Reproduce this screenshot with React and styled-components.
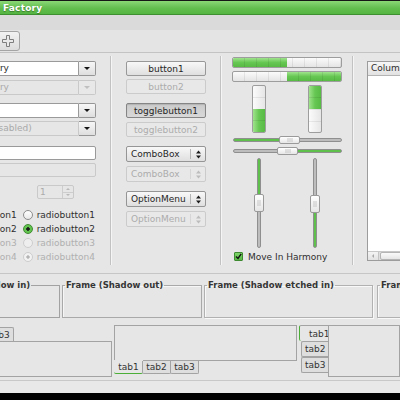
import React from "react";
import styled, { createGlobalStyle } from "styled-components";

const GlobalStyle = createGlobalStyle`
  html, body { margin: 0; padding: 0; background: #e6e6e6; }
  body { font-family: "DejaVu Sans", "Liberation Sans", sans-serif; font-size: 9px; color: #2e2e2e; }
  *, *::before, *::after { box-sizing: border-box; }
`;

const Window = styled.div`
  width: 400px; height: 400px; overflow: hidden;
  display: flex; flex-direction: column; background: #e6e6e6;
`;

const TitleBar = styled.header`
  flex: none; height: 15px; display: flex; align-items: center; padding-left: 3px;
  border-top: 1px solid #161616; border-bottom: 1px solid #3d8f2f;
  background: linear-gradient(#8ad776, #62be4e 55%, #55b542);
`;
const Title = styled.span`
  color: #fff; font-weight: bold; font-size: 9px; letter-spacing: 0.2px;
  text-shadow: 0 1px 1px rgba(0,0,0,0.35);
`;
const MenuBar = styled.div`flex: none; height: 15px; background: #dadada;`;
const Toolbar = styled.div`
  flex: none; height: 23px; display: flex; align-items: flex-start; padding-top: 1px;
  background: #e4e4e4; border-bottom: 1px solid #c3c3c3;
`;
const ToolButton = styled.div`
  width: 24px; height: 20px; margin-left: -4px; display: flex; align-items: center; justify-content: center;
  border: 1px solid #a4a4a4; border-radius: 3px; background: linear-gradient(#f2f2f2, #dcdcdc);
`;

const Main = styled.main`
  flex: none; height: 221px; display: flex; border-bottom: 1px solid #c6c6c6;
`;
const VSep = styled.div`
  flex: none; width: 2px; margin: 3px 0 8px;
  border-left: 1px solid #c2c2c2; border-right: 1px solid #f5f5f5;
`;

/* ---------- column 1 ---------- */
const EntryColumn = styled.section`
  flex: none; width: 110px; overflow: hidden; display: flex; flex-direction: column;
  align-items: flex-end; padding: 8px 14px 0 0;
`;
const Combo = styled.div`
  flex: none; display: flex; width: ${p => p.$w}px; height: 15px; margin-top: ${p => p.$mt || 0}px;
`;
const ComboEntry = styled.div`
  flex: 1; min-width: 0; padding-left: 3px; line-height: 13px; white-space: nowrap; overflow: hidden;
  border: 1px solid ${p => (p.$disabled ? "#c9c9c9" : "#9a9a9a")}; border-radius: 2px 0 0 2px;
  background: ${p => (p.$disabled ? "#e6e6e6" : "#ffffff")};
  color: ${p => (p.$disabled ? "#a9a9a9" : "#2e2e2e")};
`;
const ComboArrow = styled.div`
  flex: none; width: 17px; display: flex; align-items: center; justify-content: center;
  border: 1px solid ${p => (p.$disabled ? "#c9c9c9" : "#959595")}; border-left: none; border-radius: 0 2px 2px 0;
  background: ${p => (p.$disabled ? "#e8e8e8" : "linear-gradient(#f7f7f7, #dedede)")};
  &::before {
    content: ""; border-left: 3px solid transparent; border-right: 3px solid transparent;
    border-top: 3px solid ${p => (p.$disabled ? "#c0c0c0" : "#151515")};
  }
`;
const Entry = styled.div`
  flex: none; width: 120px; height: 14px; margin-top: ${p => p.$mt}px; border-radius: 2px;
  border: 1px solid ${p => (p.$disabled ? "#c9c9c9" : "#9a9a9a")};
  background: ${p => (p.$disabled ? "#e6e6e6" : "#ffffff")};
`;
const Spin = styled.div`
  flex: none; display: flex; width: 37px; height: 14px; margin: 8px 22px 0 0;
  border: 1px solid #c9c9c9; border-radius: 2px; background: #e6e6e6; color: #ababab;
`;
const SpinValue = styled.span`flex: 1; padding-left: 2px; line-height: 12px;`;
const SpinArrows = styled.div`
  flex: none; width: 11px; display: flex; flex-direction: column; border-left: 1px solid #cdcdcd;
`;
const SpinHalf = styled.div`
  flex: 1; display: flex; align-items: center; justify-content: center;
  border-top: ${p => (p.$down ? "1px solid #cdcdcd" : "none")};
  &::before {
    content: ""; border-left: 2px solid transparent; border-right: 2px solid transparent;
    ${p => (p.$down ? "border-top: 2px solid #b8b8b8;" : "border-bottom: 2px solid #b8b8b8;")}
  }
`;
const RadioRow = styled.div`
  flex: none; display: flex; align-items: center; height: 14px; margin: ${p => p.$mt || 0}px 1px 0 0;
  white-space: nowrap; color: ${p => (p.$disabled ? "#b0b0b0" : "#2e2e2e")};
`;
const SideLabel = styled.span`margin-right: 6px;`;
const Radio = styled.span`
  flex: none; width: 10px; height: 10px; border-radius: 50%;
  border: 1px solid ${p => (p.$disabled ? "#cdcdcd" : p.$checked ? "#3f8b31" : "#8d8d8d")};
  background: ${p =>
    p.$checked
      ? p.$disabled
        ? "radial-gradient(circle, #b4b4b4 0 1.4px, #f2f2f2 1.9px)"
        : "radial-gradient(circle, #1b1b1b 0 1.5px, #63c34f 2px)"
      : p.$disabled
      ? "#eeeeee"
      : "linear-gradient(#ffffff, #e8e8e8)"};
`;
const RadioText = styled.span`margin-left: 4px;`;

/* ---------- column 2 ---------- */
const ButtonColumn = styled.section`
  flex: none; width: 108px; display: flex; flex-direction: column; align-items: center; padding-top: 8px;
`;
const Button = styled.div`
  flex: none; width: 80px; height: 15px; margin-top: ${p => p.$mt || 0}px;
  display: flex; align-items: center; justify-content: center; border-radius: 2px;
  border: 1px solid ${p => (p.$disabled ? "#cbcbcb" : p.$active ? "#858585" : "#989898")};
  background: ${p =>
    p.$disabled ? "#e8e8e8" : p.$active ? "linear-gradient(#cbcbcb, #d8d8d8)" : "linear-gradient(#f8f8f8, #dfdfdf)"};
  box-shadow: ${p => (p.$active ? "inset 0 1px 1px rgba(0,0,0,0.12)" : "none")};
  color: ${p => (p.$disabled ? "#acacac" : "#262626")};
`;
const ComboButton = styled.div`
  flex: none; width: 80px; height: 16px; margin-top: ${p => p.$mt || 0}px;
  display: flex; align-items: center; border-radius: 2px;
  border: 1px solid ${p => (p.$disabled ? "#cbcbcb" : "#959595")};
  background: ${p => (p.$disabled ? "#e8e8e8" : "linear-gradient(#f8f8f8, #dfdfdf)")};
  color: ${p => (p.$disabled ? "#acacac" : "#262626")};
`;
const ComboLabel = styled.span`flex: 1; padding-left: 4px; white-space: nowrap;`;
const ComboDivider = styled.span`
  flex: none; width: 1px; height: 10px; background: ${p => (p.$disabled ? "#d6d6d6" : "#b5b5b5")};
`;
const UpDown = styled.span`flex: none; width: 14px; display: flex; justify-content: center;`;

/* ---------- column 3 ---------- */
const RangeColumn = styled.section`
  flex: none; width: 130px; display: flex; flex-direction: column; padding: 4px 0 0 10px;
`;
const HProgress = styled.div`
  flex: none; width: 110px; height: 11px; margin-top: ${p => p.$mt || 0}px; display: flex;
  flex-direction: ${p => (p.$reverse ? "row-reverse" : "row")};
  border: 1px solid #9d9d9d; border-radius: 2px; overflow: hidden;
  background:
    repeating-linear-gradient(90deg, transparent 0 11px, rgba(0,0,0,0.07) 11px 12px),
    linear-gradient(#fbfbfb, #e4e4e4);
`;
const HFill = styled.div`
  flex: none; width: ${p => p.$pct}%; height: 100%;
  background:
    repeating-linear-gradient(90deg, transparent 0 11px, rgba(0,0,0,0.08) 11px 12px),
    linear-gradient(#9fe38c, #66c752 50%, #58bb44);
`;
const VProgressRow = styled.div`
  flex: none; display: flex; gap: 42px; padding-left: 20px; margin-top: 3px;
`;
const VProgress = styled.div`
  flex: none; width: 14px; height: 48px; display: flex;
  flex-direction: ${p => (p.$reverse ? "column" : "column-reverse")};
  border: 1px solid #9d9d9d; border-radius: 2px; overflow: hidden;
  background:
    repeating-linear-gradient(180deg, transparent 0 11px, rgba(0,0,0,0.07) 11px 12px),
    linear-gradient(90deg, #fbfbfb, #e6e6e6);
`;
const VFill = styled.div`
  flex: none; height: ${p => p.$pct}%;
  background:
    repeating-linear-gradient(180deg, transparent 0 11px, rgba(0,0,0,0.08) 11px 12px),
    linear-gradient(90deg, #9fe38c, #66c752 50%, #58bb44);
`;
const HScale = styled.div`
  flex: none; position: relative; width: 109px; height: 8px; margin: 3px 0 0 1px;
  display: flex; align-items: center;
`;
const HTrough = styled.div`
  width: 100%; height: 4px; border-radius: 2px; border: 1px solid #8f8f8f;
  background: ${p =>
    p.$greenRight
      ? `linear-gradient(90deg, #bdbdbd 0 ${p.$at}px, #5fc04b ${p.$at}px)`
      : `linear-gradient(90deg, #5fc04b 0 ${p.$at}px, #bdbdbd ${p.$at}px)`};
`;
const Grip = styled.div`
  position: absolute; border: 1px solid #9a9a9a; border-radius: 2px;
  background: linear-gradient(#ffffff, #e6e6e6);
  display: flex; align-items: center; justify-content: center;
  &::after {
    content: ""; width: ${p => (p.$vertical ? "4px" : "6px")}; height: ${p => (p.$vertical ? "6px" : "4px")};
    background: radial-gradient(circle, #c2c2c2 0 0.6px, transparent 0.8px) 0 0 / 2px 2px;
  }
`;
const HGrip = styled(Grip)`top: 0; width: 21px; height: 8px;`;
const VScaleRow = styled.div`
  flex: none; display: flex; gap: 46px; padding-left: 22px; margin-top: 3px;
`;
const VScale = styled.div`
  flex: none; position: relative; width: 10px; height: 90px; display: flex; justify-content: center;
`;
const VTrough = styled.div`
  width: 4px; height: 100%; border-radius: 2px; border: 1px solid #8f8f8f;
  background: ${p =>
    p.$greenBottom
      ? `linear-gradient(180deg, #bdbdbd 0 ${p.$at}px, #5fc04b ${p.$at}px)`
      : `linear-gradient(180deg, #5fc04b 0 ${p.$at}px, #bdbdbd ${p.$at}px)`};
`;
const VGrip = styled(Grip)`left: 0; width: 10px; height: 18px;`;
const CheckRow = styled.label`
  flex: none; display: flex; align-items: center; gap: 5px; height: 11px; margin: 3px 0 0 2px; white-space: nowrap;
`;
const CheckBox = styled.span`
  flex: none; width: 9px; height: 9px; border: 1px solid #3e8a30; border-radius: 1px;
  background: linear-gradient(#7dd469, #58ba44); display: flex; align-items: center; justify-content: center;
`;

/* ---------- column 4 ---------- */
const TreeColumn = styled.section`
  flex: 1; min-width: 0; overflow: hidden; padding: 8px 0 0 13px;
`;
const Tree = styled.div`
  width: 60px; height: 200px; display: flex; flex-direction: column;
  border: 1px solid #9c9c9c; background: #ffffff;
`;
const TreeHeader = styled.div`
  flex: none; height: 14px; padding-left: 3px; line-height: 13px; white-space: nowrap;
  border-bottom: 1px solid #b4b4b4; background: linear-gradient(#f6f6f6, #e2e2e2);
`;
const TreeBody = styled.div`flex: 1;`;
const HScrollbar = styled.div`
  flex: none; height: 9px; display: flex; background: #dedede; border-top: 1px solid #c8c8c8;
`;
const ScrollArrow = styled.div`
  flex: none; width: 11px; display: flex; align-items: center; justify-content: center;
  border-right: 1px solid #c4c4c4; background: linear-gradient(#f4f4f4, #e2e2e2);
  &::before { content: ""; border-top: 2px solid transparent; border-bottom: 2px solid transparent; border-right: 2px solid #a8a8a8; }
`;
const ScrollThumb = styled.div`
  flex: 1; margin-left: 1px; border: 1px solid #b4b4b4; border-radius: 2px;
  background: linear-gradient(#fafafa, #e6e6e6);
`;

/* ---------- frames ---------- */
const FramesRow = styled.div`
  flex: none; height: 47px; display: flex; align-items: flex-start; gap: 2px; margin-left: -64px;
`;
const Frame = styled.fieldset`
  flex: none; width: ${p => p.$w}px; height: 38px; margin: 6px 0 0 ${p => p.$ml || 0}px; padding: 0; min-width: 0;
  border: 1px solid #a7a7a7;
  ${p => (p.$kind === "in" ? "border-color: #a2a2a2;" : "")}
  ${p => (p.$kind === "out" ? "border-color: #a9a9a9; box-shadow: inset 1px 1px 0 #f6f6f6;" : "")}
  ${p => (p.$kind === "etched" ? "border-color: #b1b1b1; box-shadow: inset 1px 1px 0 #f8f8f8, 1px 1px 0 #f8f8f8;" : "")}
`;
const FrameLabel = styled.legend`
  margin-left: 2px; padding: 0 1px; font-weight: bold; font-size: 8.5px; line-height: 11px;
  color: #353535; white-space: nowrap;
`;

/* ---------- notebooks ---------- */
const NotebookRow = styled.div`
  flex: none; height: 59px; display: flex; align-items: flex-start; gap: 2px; margin-left: -73px;
`;
const TopNotebook = styled.div`
  flex: none; width: 185px; padding-top: 6px; display: flex; flex-direction: column;
`;
const TabStrip = styled.div`
  display: flex; padding-left: ${p => p.$indent || 0}px;
`;
const Tab = styled.div`
  flex: none; width: 29px; height: 14px; display: flex; align-items: center; justify-content: center;
  border: 1px solid #a3a3a3; background: #dedede; color: #333;
  & + & { margin-left: -1px; }
`;
const TopTab = styled(Tab)`border-bottom: none; border-radius: 2px 2px 0 0;`;
const Panel = styled.div`
  flex: none; height: ${p => p.$h}px; border: 1px solid #a3a3a3; background: #e6e6e6;
`;
const BottomNotebook = styled.div`
  flex: none; width: 183px; margin-top: 4px; display: flex; flex-direction: column;
`;
const BottomTab = styled(Tab)`
  height: 13px; border-top: none; border-radius: 0 0 2px 2px;
  ${p => (p.$active ? "background: #e6e6e6; height: 14px; margin-top: -1px; border: none; border-bottom: 1px solid #4aae37;" : "")}
`;
const SideNotebook = styled.div`
  flex: 1; margin-top: 4px; display: flex; min-width: 0;
`;
const SideTabs = styled.div`display: flex; flex-direction: column; align-items: flex-end; flex: none; width: 29px;`;
const SideTab = styled.div`
  flex: none; height: 16px; width: ${p => (p.$active ? 29 : 27)}px; display: flex; align-items: center;
  padding-left: ${p => (p.$active ? 9 : 3)}px;
  border: 1px solid #a3a3a3; border-right: none; border-radius: 2px 0 0 2px;
  background: ${p => (p.$active ? "#e6e6e6" : "#dedede")};
  ${p => (p.$active ? "border-left: 1px solid #4aae37; border-bottom: none;" : "")}
  color: #333;
`;
const SidePanel = styled.div`
  flex: 1; height: 52px; border: 1px solid #a3a3a3; background: #e6e6e6;
`;

const StatusBar = styled.footer`
  flex: none; height: 13px; border-top: 1px solid #c8c8c8; background: #e8e8e8;
`;
const Screen = styled.div`flex: 1; background: #000;`;

const PlusIcon = () => (
  <svg width="12" height="12" viewBox="0 0 12 12">
    <path d="M4.5 0.5h3v4h4v3h-4v4h-3v-4h-4v-3h4z" fill="#e9e9e9" stroke="#7d7d7d" strokeWidth="1" />
  </svg>
);

const UpDownIcon = ({ color }) => (
  <svg width="5" height="9" viewBox="0 0 5 9">
    <polygon points="0,3.5 2.5,0.5 5,3.5" fill={color} />
    <polygon points="0,5.5 5,5.5 2.5,8.5" fill={color} />
  </svg>
);

const CheckMark = () => (
  <svg width="7" height="7" viewBox="0 0 7 7">
    <path d="M1 3.5 L3 5.5 L6.2 0.8" fill="none" stroke="#111" strokeWidth="1.4" />
  </svg>
);

const radios = [
  { n: 1, checked: false, disabled: false },
  { n: 2, checked: true, disabled: false },
  { n: 3, checked: false, disabled: true },
  { n: 4, checked: true, disabled: true },
];

export default function App() {
  return (
    <>
      <GlobalStyle />
      <Window>
        <TitleBar>
          <Title>Factory</Title>
        </TitleBar>
        <MenuBar />
        <Toolbar>
          <ToolButton>
            <PlusIcon />
          </ToolButton>
        </Toolbar>

        <Main>
          <EntryColumn>
            <Combo $w={115}>
              <ComboEntry>Entry</ComboEntry>
              <ComboArrow />
            </Combo>
            <Combo $w={115} $mt={4}>
              <ComboEntry $disabled>Entry</ComboEntry>
              <ComboArrow $disabled />
            </Combo>
            <Combo $w={115} $mt={8}>
              <ComboEntry />
              <ComboArrow />
            </Combo>
            <Combo $w={140} $mt={3}>
              <ComboEntry $disabled>Entry (disabled)</ComboEntry>
              <ComboArrow />
            </Combo>
            <Entry $mt={10} />
            <Entry $mt={3} $disabled />
            <Spin>
              <SpinValue>1</SpinValue>
              <SpinArrows>
                <SpinHalf />
                <SpinHalf $down />
              </SpinArrows>
            </Spin>
            {radios.map((r, i) => (
              <RadioRow key={r.n} $mt={i === 0 ? 9 : 0} $disabled={r.disabled}>
                <SideLabel>checkbutton{r.n}</SideLabel>
                <Radio $checked={r.checked} $disabled={r.disabled} />
                <RadioText>radiobutton{r.n}</RadioText>
              </RadioRow>
            ))}
          </EntryColumn>
          <VSep />

          <ButtonColumn>
            <Button>button1</Button>
            <Button $mt={3} $disabled>button2</Button>
            <Button $mt={9} $active>togglebutton1</Button>
            <Button $mt={4} $disabled>togglebutton2</Button>
            <ComboButton $mt={9}>
              <ComboLabel>ComboBox</ComboLabel>
              <ComboDivider />
              <UpDown><UpDownIcon color="#1c1c1c" /></UpDown>
            </ComboButton>
            <ComboButton $mt={4} $disabled>
              <ComboLabel>ComboBox</ComboLabel>
              <ComboDivider $disabled />
              <UpDown><UpDownIcon color="#bcbcbc" /></UpDown>
            </ComboButton>
            <ComboButton $mt={9}>
              <ComboLabel>OptionMenu</ComboLabel>
              <ComboDivider />
              <UpDown><UpDownIcon color="#1c1c1c" /></UpDown>
            </ComboButton>
            <ComboButton $mt={4} $disabled>
              <ComboLabel>OptionMenu</ComboLabel>
              <ComboDivider $disabled />
              <UpDown><UpDownIcon color="#bcbcbc" /></UpDown>
            </ComboButton>
          </ButtonColumn>
          <VSep />

          <RangeColumn>
            <HProgress>
              <HFill $pct={50} />
            </HProgress>
            <HProgress $mt={3} $reverse>
              <HFill $pct={50} />
            </HProgress>
            <VProgressRow>
              <VProgress>
                <VFill $pct={50} />
              </VProgress>
              <VProgress $reverse>
                <VFill $pct={50} />
              </VProgress>
            </VProgressRow>
            <HScale>
              <HTrough $at={48} />
              <HGrip style={{ left: 46 }} />
            </HScale>
            <HScale>
              <HTrough $at={62} $greenRight />
              <HGrip style={{ left: 44 }} />
            </HScale>
            <VScaleRow>
              <VScale>
                <VTrough $at={38} />
                <VGrip $vertical style={{ top: 36 }} />
              </VScale>
              <VScale>
                <VTrough $at={53} $greenBottom />
                <VGrip $vertical style={{ top: 37 }} />
              </VScale>
            </VScaleRow>
            <CheckRow>
              <CheckBox><CheckMark /></CheckBox>
              <span>Move In Harmony</span>
            </CheckRow>
          </RangeColumn>
          <VSep />

          <TreeColumn>
            <Tree>
              <TreeHeader>Column</TreeHeader>
              <TreeBody />
              <HScrollbar>
                <ScrollArrow />
                <ScrollThumb />
              </HScrollbar>
            </Tree>
          </TreeColumn>
        </Main>

        <FramesRow>
          <Frame $w={124} $kind="in">
            <FrameLabel>Frame (Shadow in)</FrameLabel>
          </Frame>
          <Frame $w={140} $kind="out">
            <FrameLabel>Frame (Shadow out)</FrameLabel>
          </Frame>
          <Frame $w={169} $kind="etched">
            <FrameLabel>Frame (Shadow etched in)</FrameLabel>
          </Frame>
          <Frame $w={120} $ml={2} $kind="etched">
            <FrameLabel>Frame (Shadow etched out)</FrameLabel>
          </Frame>
        </FramesRow>

        <NotebookRow>
          <TopNotebook>
            <TabStrip $indent={2}>
              <TopTab>tab1</TopTab>
              <TopTab>tab2</TopTab>
              <TopTab>tab3</TopTab>
            </TabStrip>
            <Panel $h={36} />
          </TopNotebook>
          <BottomNotebook>
            <Panel $h={36} />
            <TabStrip>
              <BottomTab $active>tab1</BottomTab>
              <BottomTab>tab2</BottomTab>
              <BottomTab>tab3</BottomTab>
            </TabStrip>
          </BottomNotebook>
          <SideNotebook>
            <SideTabs>
              <SideTab $active>tab1</SideTab>
              <SideTab>tab2</SideTab>
              <SideTab>tab3</SideTab>
            </SideTabs>
            <SidePanel />
          </SideNotebook>
        </NotebookRow>

        <StatusBar />
        <Screen />
      </Window>
    </>
  );
}
